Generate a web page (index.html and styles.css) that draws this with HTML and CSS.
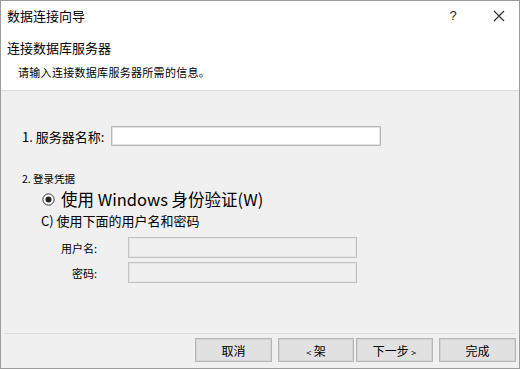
FILE: index.html
```html
<!DOCTYPE html>
<html lang="zh-CN">
<head>
    <meta charset="UTF-8">
    <title>数据连接向导</title>
    <link rel="stylesheet" href="styles.css">
</head>
<body>
    <div class="window">
        <div class="titlebar">
            <span class="title">数据连接向导</span>
            <span class="help">?</span>
            <span class="close">
                <svg width="12" height="12" viewBox="0 0 12 12">
                    <path d="M1 1 L11 11 M11 1 L1 11" stroke="#333" stroke-width="1.2" fill="none"/>
                </svg>
            </span>
        </div>

        <div class="header">
            <div class="heading">连接数据库服务器</div>
            <div class="subtext">请输入连接数据库服务器所需的信息。</div>
        </div>

        <div class="content">
            <div class="server-row">
                <span class="server-label">1. 服务器名称:</span>
                <input type="text" class="server-input">
            </div>

            <div class="section-label">2. 登录凭据</div>

            <div class="radio-line">
                <svg class="radio" width="13" height="13" viewBox="0 0 13 13">
                    <circle cx="6.5" cy="6.5" r="5.6" fill="#fff" stroke="#333" stroke-width="1"/>
                    <circle cx="6.5" cy="6.5" r="3" fill="#222"/>
                </svg>
                <span>使用 Windows 身份验证(W)</span>
            </div>
            <div class="alt-line">C) 使用下面的用户名和密码</div>

            <div class="cred-row first">
                <span class="cred-label">用户名:</span>
                <input type="text" class="cred-input" disabled>
            </div>
            <div class="cred-row">
                <span class="cred-label">密码:</span>
                <input type="password" class="cred-input" disabled>
            </div>
        </div>

        <div class="footer">
            <div class="buttons">
                <button type="button" class="btn cancel">取消</button>
                <button type="button" class="btn back"><span class="arrow">&lt;</span> 架</button>
                <button type="button" class="btn next">下一步 <span class="arrow">&gt;</span></button>
                <button type="button" class="btn finish">完成</button>
            </div>
        </div>
    </div>
</body>
</html>
```

FILE: styles.css
```css
body {
    margin: 0;
    font-family: "Noto Sans CJK SC", "Noto Sans", sans-serif;
    color: #000;
    background-color: #fff;
}

.window {
    width: 520px;
    height: 369px;
    box-sizing: border-box;
    border: 1px solid #9c9c9c;
    background-color: #f0f0f0;
    display: flex;
    flex-direction: column;
}

.titlebar {
    height: 29px;
    background-color: #fff;
    display: flex;
    align-items: center;
    padding-left: 6px;
}

.title {
    font-size: 13px;
    flex: 1;
}

.help {
    font-family: "Liberation Sans", sans-serif;
    font-size: 13px;
    width: 20px;
    text-align: center;
    color: #222;
}

.close {
    width: 24px;
    margin-left: 24px;
    margin-right: 8px;
    display: flex;
    justify-content: center;
}

.header {
    height: 60px;
    background-color: #fff;
    border-bottom: 1px solid #dadada;
}

.heading {
    font-size: 13px;
    line-height: 18px;
    padding: 9px 0 0 6px;
}

.subtext {
    font-size: 11px;
    line-height: 16px;
    padding-left: 17px;
    margin-top: 7px;
    letter-spacing: 0.3px;
}

.content {
    flex: 1;
}

.server-row {
    display: flex;
    align-items: center;
    margin-top: 35px;
    padding-left: 21px;
}

.server-label {
    font-size: 13px;
    width: 89px;
    white-space: nowrap;
}

.server-input {
    width: 270px;
    height: 20px;
    box-sizing: border-box;
    border: 1px solid #b9b9b9;
    box-shadow: inset 0 0 0 1px #e2e2e2;
    background-color: #fff;
    padding: 0 3px;
    font-size: 12px;
}

.section-label {
    font-size: 10.5px;
    line-height: 14px;
    margin-top: 26px;
    padding-left: 21px;
}

.radio-line {
    display: flex;
    align-items: center;
    height: 24px;
    line-height: 24px;
    margin-top: 1px;
    padding-left: 41px;
    font-size: 16.5px;
}

.radio {
    margin-right: 6px;
}

.alt-line {
    font-size: 13px;
    line-height: 19px;
    padding-left: 40px;
}

.cred-row {
    display: flex;
    align-items: center;
    margin-top: 4px;
}

.cred-row.first {
    margin-top: 7px;
}

.cred-label {
    width: 96px;
    text-align: right;
    font-size: 11px;
    margin-right: 31px;
}

.cred-input {
    width: 229px;
    height: 21px;
    box-sizing: border-box;
    border: 1px solid #c2c2c2;
    box-shadow: inset 0 0 0 1px #e6e6e6;
    background-color: #f0f0f0;
}

.footer {
    height: 34px;
    margin: 0 3px;
    border-top: 1px solid #dcdcdc;
}

.buttons {
    display: flex;
    justify-content: flex-end;
    padding-top: 4px;
}

.btn {
    width: 77px;
    height: 24px;
    box-sizing: border-box;
    border: 1px solid #b6b6b6;
    box-shadow: inset 0 0 0 1px #d4d4d4;
    background-color: #e1e1e1;
    font-family: "Noto Sans CJK SC", sans-serif;
    font-size: 12px;
    color: #000;
    padding: 0;
}

.arrow {
    font-size: 9px;
}

.cancel {
    margin-right: 6px;
}

.back {
    width: 76px;
    margin-right: 2px;
}

.next {
    margin-right: 6px;
}
```
